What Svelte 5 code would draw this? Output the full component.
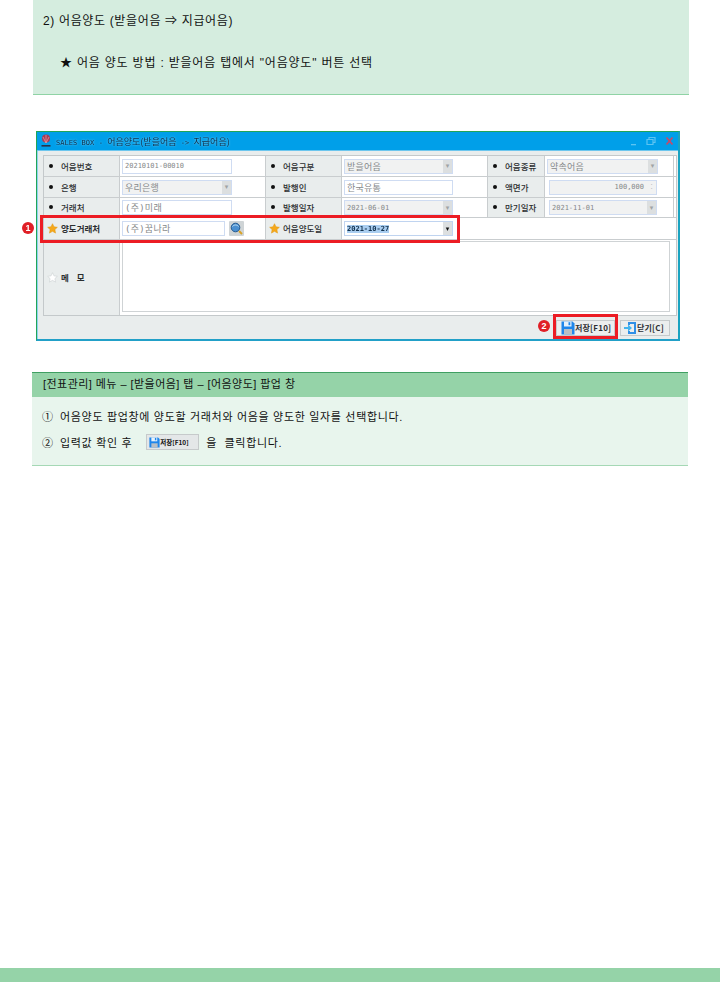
<script>
  const rows = [
    [
      { label: '어음번호', value: '20210101-00010', kind: 'text', w: 110 },
      { label: '어음구분', value: '받을어음', kind: 'select', w: 109 },
      { label: '어음종류', value: '약속어음', kind: 'select', w: 111 }
    ],
    [
      { label: '은행', value: '우리은행', kind: 'select', w: 110 },
      { label: '발행인', value: '한국유통', kind: 'text', w: 109 },
      { label: '액면가', value: '100,000', kind: 'spin', w: 108, inset: true }
    ],
    [
      { label: '거래처', value: '(주)미래', kind: 'text', w: 110 },
      { label: '발행일자', value: '2021-06-01', kind: 'select', w: 109 },
      { label: '만기일자', value: '2021-11-01', kind: 'select', w: 108, inset: true }
    ]
  ];
  const isHangul = (s) => /[가-힣]/.test(s);
  const titleHead = 'SALES BOX - ';
  const titleArrow = ' -> ';
</script>

{#snippet star(fill, stroke)}
  <svg class="star" viewBox="0 0 12 12" aria-hidden="true">
    <path d="M6 .8 7.6 4.2 11.3 4.700 8.600 7.200 9.300 11 6 9.100 2.700 11 3.400 7.200.7 4.700 4.400 4.200Z" {fill} {stroke} stroke-width=".6" />
  </svg>
{/snippet}

{#snippet disk(size)}
  <svg width={size} height={size} viewBox="0 0 14 14" aria-hidden="true">
    <path d="M.5.5H11.500L13.500 2.500V13.500H.5Z" fill="#1f86ea" />
    <rect x="3" y=".5" width="7.500" height="5" fill="#e8f2fb" />
    <rect x="7.500" y="1.200" width="1.800" height="3" fill="#1f86ea" />
    <rect x="3" y="8" width="8" height="5.500" fill="#b9bfc5" />
  </svg>
{/snippet}

<div class="page">
  <section class="intro">
    <p class="heading">2) 어음양도 (받을어음 ⇒ 지급어음)</p>
    <p class="method">★ 어음 양도 방법 : 받을어음 탭에서 "어음양도" 버튼 선택</p>
  </section>

  <div class="window">
    <header class="title">
      <svg class="logo" viewBox="0 0 12 14" aria-hidden="true">
        <circle cx="6" cy="4.500" r="4" fill="#a83a55" />
        <path d="M6 1V9M3 3 6 9 9 3" stroke="#e8a0a8" stroke-width=".7" fill="none" />
        <rect x="1.500" y="11" width="9" height="1.600" fill="#28324a" />
      </svg>
      <span class="title-text"><span class="latin">{titleHead}</span>어음양도(받을어음<span class="latin">{titleArrow}</span>지급어음)</span>
      <span class="controls">
        <svg viewBox="0 0 50 12" aria-hidden="true">
          <rect x="2" y="9" width="5" height="1.300" fill="#5cc4f2" />
          <path d="M18 4.500h6v5h-6ZM20 4.500V2.500h6v5h-2" fill="none" stroke="#5cc4f2" stroke-width="1.200" />
          <path d="M37.500 2.500 43.500 9.500M43.500 2.500 37.500 9.500" stroke="#c44b6a" stroke-width="1.700" />
        </svg>
      </span>
    </header>

    <div class="body">
      <div class="table">
        {#each rows as row, r}
          <div class="row" class:short={r === 2}>
            {#each row as f}
              <div class="label"><span class="dot"></span>{f.label}</div>
              <div class="cell" class:inset={f.inset}>
                <div class="field {f.kind}" style="width: {f.w}px">
                  <span class="val" class:ko={isHangul(f.value)}>{f.value}</span>
                  {#if f.kind === 'select'}<span class="arrow">▾</span>{/if}
                  {#if f.kind === 'spin'}<span class="arrow spin">⁚</span>{/if}
                </div>
              </div>
            {/each}
          </div>
        {/each}

        <div class="row tall">
          <div class="label strong">{@render star('#f5a81c', '#e39a10')}양도거래처</div>
          <div class="cell">
            <div class="field text" style="width: 103px"><span class="val ko">(주)꿈나라</span></div>
            <svg class="search" viewBox="0 0 15 15" aria-hidden="true">
              <rect width="15" height="15" rx="1" fill="#cfd4d6" />
              <circle cx="6.500" cy="6.500" r="4.300" fill="#4a8fd0" stroke="#24598f" />
              <path d="M3.500 5.500C5 3.500 8 3.500 9.500 5.500" stroke="#bfe0f5" fill="none" />
              <path d="M10 10 13 13" stroke="#d9a227" stroke-width="2" />
            </svg>
          </div>
          <div class="label">{@render star('#f5a81c', '#e39a10')}어음양도일</div>
          <div class="cell open">
            <div class="field select active" style="width: 109px">
              <span class="val sel">2021-10-27</span><span class="arrow dark">▾</span>
            </div>
          </div>
          <div class="blank"></div>
        </div>

        <div class="row memo">
          <div class="label strong spaced">{@render star('#fff', '#c8cdd0')}메 모</div>
          <div class="memo-cell"><div class="memo-box"></div></div>
        </div>
      </div>

      <footer class="actions">
        <button class="btn save">{@render disk(14)}<span>저장[F10]</span></button>
        <button class="btn">
          <svg width="14" height="14" viewBox="0 0 14 14" aria-hidden="true">
            <path d="M5 1H13V13H5V10H7V11H11V3H7V4H5Z" fill="#2f8fe6" />
            <path d="M1 6H5V3.500L9 7 5 10.500V8H1Z" fill="#43b4ee" />
          </svg><span>닫기[C]</span>
        </button>
      </footer>
    </div>

    <div class="mark one"><span class="badge">1</span></div>
    <div class="mark two"><span class="badge">2</span></div>
  </div>

  <section class="notes">
    <h2>[전표관리] 메뉴 – [받을어음] 탭 – [어음양도] 팝업 창</h2>
    <div class="notes-body">
      <p><span class="num">①</span>어음양도 팝업창에 양도할 거래처와 어음을 양도한 일자를 선택합니다.</p>
      <p>
        <span class="num">②</span>입력값 확인 후<span class="mini">{@render disk(11)}저장[F10]</span>을&nbsp; 클릭합니다.
      </p>
    </div>
  </section>

  <div class="bottom"></div>
</div>

<style>
  :global(body) {
    margin: 0;
    background: #fff;
  }
  .page {
    width: 720px;
    height: 982px;
    display: flex;
    flex-direction: column;
    font-family: "Liberation Sans", "Noto Sans CJK KR", sans-serif;
    font-size: 12px;
    color: #111;
    overflow: hidden;
  }
  p {
    margin: 0;
  }
  .intro {
    box-sizing: border-box;
    margin-left: 33px;
    width: 656px;
    height: 95px;
    padding: 13px 0 0 10px;
    background: #d5eddf;
    border-bottom: 1px solid #8fd3a5;
    line-height: 16px;
    letter-spacing: 0.65px;
  }
  .method {
    margin: 26px 0 0 17px;
    letter-spacing: 0.8px;
  }

  .window {
    position: relative;
    box-sizing: border-box;
    margin: 36px 0 0 36px;
    width: 644px;
    height: 210px;
    border: 1px solid #22a558;
    border-bottom: 2px solid #22a0c8;
    border-right: 2px solid #1aa3c0;
    display: flex;
    flex-direction: column;
    filter: blur(0.35px);
  }
  .title {
    height: 18px;
    background: #009fe9;
    display: flex;
    align-items: center;
    padding-left: 3px;
    flex: none;
    border-bottom: 1px solid #6cc6ee;
  }
  .logo {
    width: 12px;
    height: 14px;
    margin-right: 4px;
  }
  .title-text {
    color: #0b2f4c;
    font-family: "Noto Sans CJK KR", sans-serif;
    font-size: 9px;
    white-space: pre;
    text-shadow: 0 0 2px #8fd8f8;
  }
  .latin {
    font-family: "DejaVu Sans Mono", monospace;
    font-size: 7px;
    letter-spacing: 0.05px;
  }
  .controls {
    margin-left: auto;
    margin-right: -1px;
    display: flex;
  }
  .controls svg {
    width: 50px;
    height: 12px;
  }
  .body {
    flex: 1;
    background: #e9eded;
    padding: 4px 5px 0 5px;
    border-left: 1px solid #8fd4ee;
    display: flex;
    flex-direction: column;
  }
  .table {
    width: 632px;
    border: 1px solid #c4c9cb;
    background: #fff;
  }
  .row {
    height: 20px;
    display: grid;
    grid-template-columns: 76px 146px 76px 146px 57px 129px;
    border-bottom: 1px solid #c9cdcf;
  }
  .row.short {
    height: 19px;
  }
  .row.tall {
    height: 21px;
  }
  .row.memo {
    height: 75px;
    border-bottom: 0;
    grid-template-columns: 76px 1fr;
  }
  .label {
    background: #e9eded;
    border-right: 1px solid #c9cdcf;
    display: flex;
    align-items: center;
    padding: 0 0 1px 3px;
    font-family: "Noto Sans CJK KR", sans-serif;
    font-size: 8.500px;
    font-weight: 500;
    color: #2b2e30;
    letter-spacing: 0;
  }
  .label.strong {
    font-weight: 700;
  }
  .dot {
    width: 4px;
    height: 4px;
    border-radius: 50%;
    background: #111;
    margin: 0 8px 0 2px;
    flex: none;
  }
  .star {
    width: 11px;
    height: 11px;
    margin-right: 3px;
    flex: none;
  }
  .spaced {
    letter-spacing: 3px;
  }
  .cell {
    border-right: 1px solid #c9cdcf;
    display: flex;
    align-items: center;
    padding-left: 2px;
    background: #fff;
    gap: 4px;
    min-width: 0;
  }
  .cell.inset {
    padding-left: 4px;
  }
  .cell.open {
    border-right: 0;
  }
  .field {
    box-sizing: border-box;
    height: 15px;
    border: 1px solid #cfdcf2;
    background: #fff;
    display: flex;
    align-items: center;
    padding-left: 2px;
    font-family: "DejaVu Sans Mono", "Noto Sans CJK KR", monospace;
    font-size: 7px;
    color: #85888a;
    position: relative;
  }
  .val.ko {
    font-size: 9px;
    letter-spacing: 0.25px;
  }
  .field.select,
  .field.spin {
    background: #f1f2f2;
  }
  .field.spin {
    justify-content: flex-end;
    padding-right: 12px;
  }
  .field.active {
    background: #fff;
    color: #12324f;
    border-color: #c0d4f0;
  }
  .sel {
    background: #a9cdf0;
    font-weight: 700;
  }
  .arrow {
    position: absolute;
    right: 0;
    top: 0;
    bottom: 0;
    width: 9px;
    background: #dcdfe0;
    color: #a0a3a5;
    display: flex;
    align-items: center;
    justify-content: center;
    font-size: 7px;
    font-family: "DejaVu Sans", sans-serif;
  }
  .arrow.dark {
    color: #111;
  }
  .arrow.spin {
    background: #f1f2f2;
  }
  .search {
    width: 15px;
    height: 15px;
    flex: none;
  }
  .blank {
    grid-column: span 2;
    background: #fff;
  }
  .memo-cell {
    background: #fff;
    padding: 1px 6px 3px 2px;
    display: flex;
  }
  .memo-box {
    flex: 1;
    border: 1px solid #cfd3d5;
    background: #fff;
  }
  .actions {
    flex: 1;
    display: flex;
    justify-content: flex-end;
    align-items: center;
    gap: 5px;
    padding-right: 3px;
  }
  .btn {
    box-sizing: border-box;
    height: 16px;
    padding: 0 0 0 2px;
    display: flex;
    align-items: center;
    gap: 0;
    background: #eceeee;
    border: 1px solid #c6cacb;
    font-family: "Noto Sans CJK KR", sans-serif;
    font-size: 8px;
    font-weight: 700;
    letter-spacing: 0.2px;
    color: #2c2f33;
    width: 50px;
    white-space: nowrap;
  }
  .btn.save {
    width: 59px;
    padding-left: 4px;
  }
  .mark {
    position: absolute;
    border: 3px solid #ec1c24;
    box-sizing: border-box;
  }
  .mark.one {
    left: 3px;
    top: 83px;
    width: 420px;
    height: 28px;
  }
  .mark.two {
    left: 516px;
    top: 182px;
    width: 65px;
    height: 25px;
  }
  .badge {
    position: absolute;
    width: 12px;
    height: 12px;
    border-radius: 50%;
    background: #e01f26;
    color: #fff;
    font-size: 9px;
    font-weight: 700;
    line-height: 12px;
    text-align: center;
    top: 4px;
    left: -21px;
  }
  .mark.two .badge {
    left: -18px;
    top: 3px;
  }

  .notes {
    box-sizing: border-box;
    margin: 31px 0 0 32px;
    width: 656px;
    height: 94px;
    background: #e8f5ed;
    border-bottom: 1px solid #a5d8b5;
  }
  h2 {
    margin: 0;
    height: 25px;
    box-sizing: border-box;
    border-top: 1px solid #3f9f62;
    background: #95d3a8;
    padding-left: 11px;
    font-size: 11px;
    font-weight: 400;
    line-height: 22px;
    letter-spacing: 0.45px;
    color: #111;
  }
  .notes-body {
    padding: 6px 0 0 10px;
    font-size: 11px;
    letter-spacing: 0.68px;
  }
  .notes-body p {
    height: 26px;
    display: flex;
    align-items: center;
    white-space: pre-wrap;
  }
  .num {
    width: 18px;
    flex: none;
  }
  .mini {
    display: inline-flex;
    align-items: center;
    width: 53px;
    height: 16px;
    margin: 0 7px 0 14px;
    box-sizing: border-box;
    padding-left: 2px;
    background: #e4e7e8;
    border: 1px solid #c6cacb;
    font-family: "Noto Sans CJK KR", sans-serif;
    font-size: 6.500px;
    font-weight: 700;
    letter-spacing: 0;
  }
  .bottom {
    margin-top: auto;
    height: 14px;
    background: #95d3a8;
    flex: none;
  }
</style>
